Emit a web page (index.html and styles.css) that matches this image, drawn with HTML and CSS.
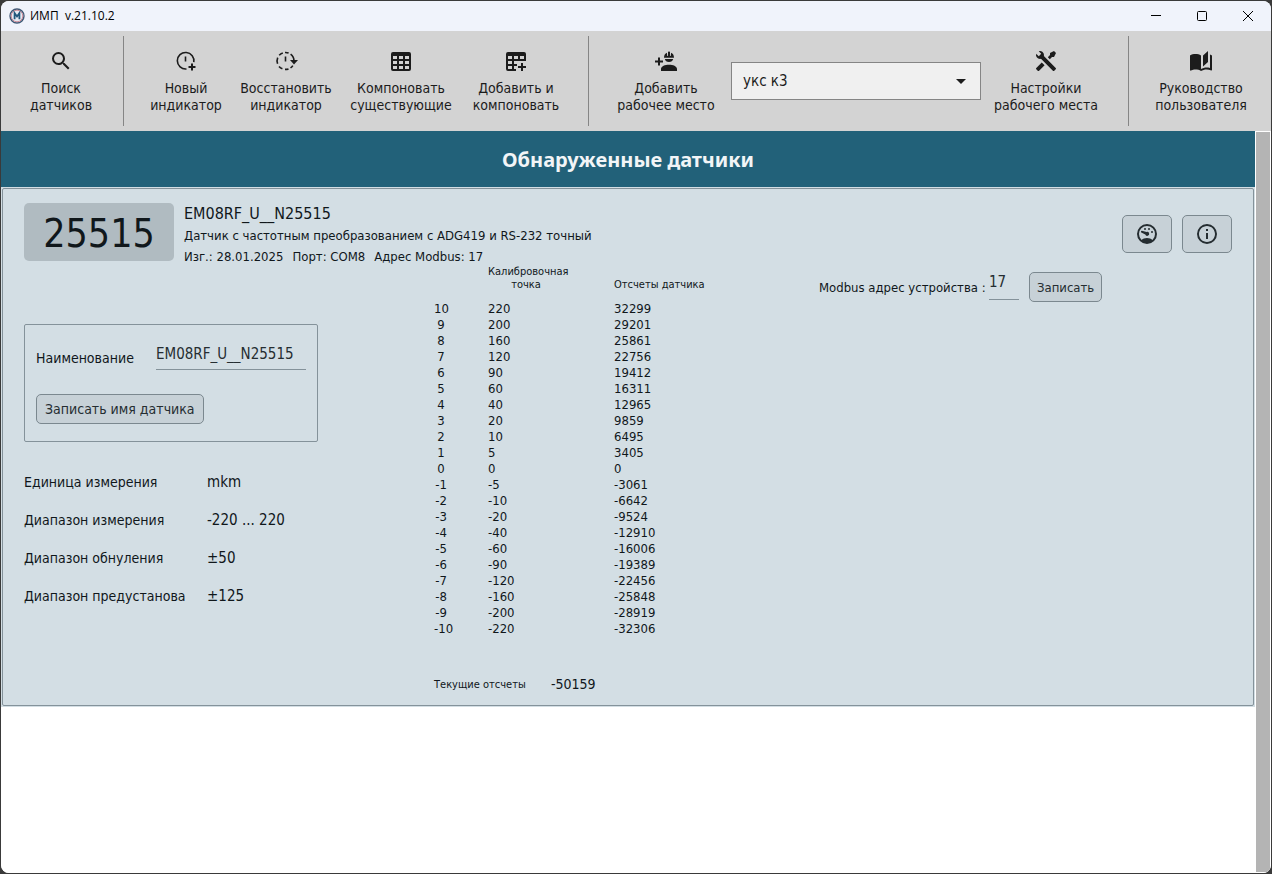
FILE: index.html
```html
<!DOCTYPE html>
<html lang="ru">
<head>
<meta charset="utf-8">
<title>ИМП v.21.10.2</title>
<link rel="stylesheet" href="styles.css">
</head>
<body>
<div class="window">
  <header class="titlebar">
    <svg class="app-logo" viewBox="0 0 16 16" aria-hidden="true">
      <circle cx="8" cy="8" r="7" fill="#e6eaf2" stroke="#3f5875" stroke-width="1.4"/>
      <circle cx="8" cy="8" r="5.8" fill="none" stroke="#c77482" stroke-width="0.8"/>
      <path d="M5.6 11.2V5L8 8.4L10.4 5V11.2" fill="none" stroke="#23577c" stroke-width="1.8"/>
    </svg>
    <span class="app-title">ИМП&nbsp; v.21.10.2</span>
    <div class="window-controls">
      <button class="window-button" aria-label="Свернуть"><svg viewBox="0 0 12 12"><path d="M1 5.5H11"/></svg></button>
      <button class="window-button" aria-label="Развернуть"><svg viewBox="0 0 12 12"><rect x="1.5" y="1.5" width="9" height="9" rx="1"/></svg></button>
      <button class="window-button" aria-label="Закрыть"><svg viewBox="0 0 12 12"><path d="M1 1L11 11M11 1L1 11"/></svg></button>
    </div>
  </header>

  <nav class="toolbar">
    <div class="tool-group group-search">
      <button class="tool"><svg class="icon" viewBox="0 0 24 24"><path d="M9.5,3A6.5,6.5 0 0,1 16,9.5C16,11.11 15.41,12.59 14.44,13.73L14.71,14H15.5L20.5,19L19,20.5L14,15.5V14.71L13.73,14.44C12.59,15.41 11.11,16 9.5,16A6.5,6.5 0 0,1 3,9.5A6.5,6.5 0 0,1 9.5,3M9.5,5C7,5 5,7 5,9.5C5,12 7,14 9.5,14C12,14 14,12 14,9.5C14,7 12,5 9.5,5Z"/></svg><span>Поиск<br>датчиков</span></button>
    </div>
    <div class="tool-group group-indicators">
      <button class="tool"><svg class="icon" viewBox="0 0 24 24"><path class="line thin" d="M12.5 20A8.3 8.3 0 1 1 19.8 13.2M11.5 7.5V12.5"/><path class="line" d="M18 14.5V21.5M14.5 18H21.5"/></svg><span>Новый<br>индикатор</span></button>
      <button class="tool"><svg class="icon" viewBox="0 0 24 24"><path class="line thin" d="M8.8 4A8.5 8.5 0 0 0 5.2 6.3M3.7 8.6A8.5 8.5 0 0 0 3.6 14.7M5 17.4A8.5 8.5 0 0 0 8.4 19.8M11 20.4A8.5 8.5 0 0 0 14.5 19.9M16.5 18.9A8.5 8.5 0 0 0 18.8 16.6M11 3.5A8.5 8.5 0 0 1 14.6 4.1M16.6 5.2A8.5 8.5 0 0 1 20 12M11.5 7.5V12.5"/><path d="M16 11H24L20 15.5Z"/></svg><span>Восстановить<br>индикатор</span></button>
      <button class="tool wide"><svg class="icon" viewBox="0 0 24 24"><path fill-rule="evenodd" d="M4 3H20A2 2 0 0 1 22 5V20A2 2 0 0 1 20 22H4A2 2 0 0 1 2 20V5A2 2 0 0 1 4 3M4 7V10H8V7ZM10 7V10H14V7ZM16 7V10H20V7ZM4 12V15H8V12ZM10 12V15H14V12ZM16 12V15H20V12ZM4 17V20H8V17ZM10 17V20H14V17ZM16 17V20H20V17Z"/></svg><span>Компоновать<br>существующие</span></button>
      <button class="tool"><svg class="icon" viewBox="0 0 24 24"><path fill-rule="evenodd" d="M4 3H20A2 2 0 0 1 22 5V12H10V15H13V17H10V20H12V22H4A2 2 0 0 1 2 20V5A2 2 0 0 1 4 3M4 7V10H8V7ZM10 7V10H14V7ZM16 7V10H20V7ZM4 12V15H8V12ZM4 17V20H8V17Z"/><path class="line" d="M18 14V22M14 18H22"/></svg><span>Добавить и<br>компоновать</span></button>
    </div>
    <div class="tool-group group-workplace">
      <button class="tool"><svg class="icon" viewBox="0 0 24 24"><path class="line" d="M1 12.5H9M5 8.5V16.5"/><path d="M10 8.8C10 6.3 11.1 4.6 12.9 3.8L13.3 7H14V3.2Q14 2.5 14.7 2.5H15.3Q16 2.5 16 3.2V7H16.7L17.1 3.8C18.9 4.6 20 6.3 20 8.8ZM10.8 10H19.2A4.3 3.8 0 0 1 10.8 10M7 22V20C7 17.3 11 15.8 15 15.8S23 17.3 23 20V22Z"/></svg><span>Добавить<br>рабочее место</span></button>
      <select class="workplace" aria-label="Рабочее место"><option>укс к3</option></select>
      <button class="tool"><svg class="icon" viewBox="0 0 24 24"><path d="M21.71 20.29L20.29 21.71A1 1 0 0 1 18.88 21.71L7 9.85A3.81 3.81 0 0 1 6 10A4 4 0 0 1 2.22 4.7L4.76 7.24L5.29 6.71L6.71 5.29L7.24 4.76L4.7 2.22A4 4 0 0 1 10 6A3.81 3.81 0 0 1 9.85 7L21.71 18.88A1 1 0 0 1 21.71 20.29M2.29 18.88A1 1 0 0 0 2.29 20.29L3.71 21.71A1 1 0 0 0 5.12 21.71L10.59 16.25L7.76 13.42M20 2L16 4V6L13.83 8.17L15.83 10.17L18 8H20L22 4Z"/></svg><span>Настройки<br>рабочего места</span></button>
    </div>
    <div class="tool-group group-help">
      <button class="tool"><svg class="icon" viewBox="0 0 24 24"><path d="M19 2L14 6.5V17.5L19 13V2M6.5 5C4.55 5 2.45 5.4 1 6.5V21.16C1 21.41 1.25 21.66 1.5 21.66C1.6 21.66 1.65 21.59 1.75 21.59C3.1 20.94 5.05 20.5 6.5 20.5C8.45 20.5 10.55 20.9 12 22C13.35 21.15 15.8 20.5 17.5 20.5C19.15 20.5 20.85 20.81 22.25 21.56C22.35 21.61 22.4 21.59 22.5 21.59C22.75 21.59 23 21.34 23 21.09V6.5C22.4 6.05 21.75 5.75 21 5.5V19C19.9 18.65 18.7 18.5 17.5 18.5C15.8 18.5 13.35 19.15 12 20V6.5C10.55 5.4 8.45 5 6.5 5Z"/></svg><span>Руководство<br>пользователя</span></button>
    </div>
  </nav>

  <div class="body">
    <main class="content">
      <h1 class="banner">Обнаруженные датчики</h1>
      <section class="card-frame">
        <div class="card">
          <div class="card-head">
            <div class="serial">25515</div>
            <div class="summary">
              <h2 class="sensor-name">EM08RF_U__N25515</h2>
              <p class="sensor-type">Датчик с частотным преобразованием с ADG419 и RS-232 точный</p>
              <p class="sensor-meta"><span>Изг.: 28.01.2025</span><span>Порт: COM8</span><span>Адрес Modbus: 17</span></p>
            </div>
            <div class="card-actions">
              <button class="button icon-button" aria-label="Показания"><svg class="icon" viewBox="0 0 24 24"><circle class="line" cx="12" cy="12" r="9"/><path d="M12 16C14.2 16 16.2 16.8 17.8 18.2C16.2 20 14.2 21 12 21S7.8 20 6.2 18.2C7.8 16.8 9.8 16 12 16M6.9 8.8L11.6 10A2 2 0 1 1 10.3 12.6L6.3 10.6A1 1 0 0 1 6.9 8.8"/><circle cx="10" cy="7" r="1"/><circle cx="14" cy="7" r="1"/><circle cx="17" cy="10" r="1"/></svg></button>
              <button class="button icon-button" aria-label="Информация"><svg class="icon" viewBox="0 0 24 24"><path d="M11,9H13V7H11M12,20C7.59,20 4,16.41 4,12C4,7.59 7.59,4 12,4C16.41,4 20,7.59 20,12C20,16.41 16.41,20 12,20M12,2A10,10 0 0,0 2,12A10,10 0 0,0 12,22A10,10 0 0,0 22,12A10,10 0 0,0 12,2M11,17H13V11H11V17Z"/></svg></button>
            </div>
          </div>

          <div class="card-body">
            <div class="properties">
              <form class="name-box">
                <div class="name-row">
                  <label for="sensor-name">Наименование</label>
                  <input class="text-field" id="sensor-name" type="text" value="EM08RF_U__N25515">
                </div>
                <button class="button name-button" type="button">Записать имя датчика</button>
              </form>
              <dl class="params">
                <dt>Единица измерения</dt><dd>mkm</dd>
                <dt>Диапазон измерения</dt><dd>-220 ... 220</dd>
                <dt>Диапазон обнуления</dt><dd>±50</dd>
                <dt>Диапазон предустанова</dt><dd>±125</dd>
              </dl>
            </div>

            <div class="calibration">
              <table class="points">
                <thead><tr><th class="index"></th><th class="point">Калибровочная<br>точка</th><th>Отсчеты датчика</th></tr></thead>
                <tbody>
                  <tr><td class="index">10</td><td>220</td><td>32299</td></tr>
                  <tr><td class="index">9</td><td>200</td><td>29201</td></tr>
                  <tr><td class="index">8</td><td>160</td><td>25861</td></tr>
                  <tr><td class="index">7</td><td>120</td><td>22756</td></tr>
                  <tr><td class="index">6</td><td>90</td><td>19412</td></tr>
                  <tr><td class="index">5</td><td>60</td><td>16311</td></tr>
                  <tr><td class="index">4</td><td>40</td><td>12965</td></tr>
                  <tr><td class="index">3</td><td>20</td><td>9859</td></tr>
                  <tr><td class="index">2</td><td>10</td><td>6495</td></tr>
                  <tr><td class="index">1</td><td>5</td><td>3405</td></tr>
                  <tr><td class="index">0</td><td>0</td><td>0</td></tr>
                  <tr><td class="index">-1</td><td>-5</td><td>-3061</td></tr>
                  <tr><td class="index">-2</td><td>-10</td><td>-6642</td></tr>
                  <tr><td class="index">-3</td><td>-20</td><td>-9524</td></tr>
                  <tr><td class="index">-4</td><td>-40</td><td>-12910</td></tr>
                  <tr><td class="index">-5</td><td>-60</td><td>-16006</td></tr>
                  <tr><td class="index">-6</td><td>-90</td><td>-19389</td></tr>
                  <tr><td class="index">-7</td><td>-120</td><td>-22456</td></tr>
                  <tr><td class="index">-8</td><td>-160</td><td>-25848</td></tr>
                  <tr><td class="index">-9</td><td>-200</td><td>-28919</td></tr>
                  <tr><td class="index">-10</td><td>-220</td><td>-32306</td></tr>
                </tbody>
              </table>
              <div class="current"><span class="current-label">Текущие отсчеты</span><output>-50159</output></div>
            </div>

            <form class="modbus">
              <label for="modbus">Modbus адрес устройства :</label>
              <input class="text-field" id="modbus" type="text" value="17">
              <button class="button" type="button">Записать</button>
            </form>
          </div>
        </div>
      </section>
    </main>
    <div class="scrollbar"></div>
  </div>
</div>
</body>
</html>
```
FILE: styles.css
```css
* { box-sizing: border-box; }

body {
  margin: 0;
  height: 100vh;
  padding: 1px;
  display: flex;
  background: #3a3a3a;
  color: #10171b;
  font: 14px/17px Tahoma, "DejaVu Sans Condensed", "Noto Sans", sans-serif;
}

button, input, select { font: inherit; color: inherit; }
button { padding: 0; border: 0; background: none; }
h1, h2, p, dl, dd { margin: 0; font-weight: normal; }

.window {
  flex: 1;
  min-width: 0;
  display: flex;
  flex-direction: column;
  overflow: hidden;
  border-radius: 8px;
  background: #fff;
}

/* Title bar */
.titlebar {
  display: flex;
  align-items: center;
  height: 30px;
  padding-left: 8px;
  background: #f0f3fb;
}
.app-logo { width: 16px; height: 16px; }
.app-title {
  flex: 1;
  padding-left: 5px;
  color: #000;
  font: 12px/16px "Open Sans", "Noto Sans", sans-serif;
}
.window-controls { display: flex; }
.window-button {
  width: 46px;
  height: 30px;
  display: flex;
  align-items: center;
  justify-content: center;
}
.window-button svg {
  width: 12px;
  height: 12px;
  fill: none;
  stroke: #000;
}

/* Toolbar */
.toolbar {
  display: flex;
  height: 100px;
  padding: 5px 0;
  background: #d3d3d3;
  color: #1c1c1c;
}
.tool-group { display: flex; align-items: flex-start; }
.tool-group + .tool-group { border-left: 1px solid #858585; }
.group-search { padding-right: 2px; }
.group-search .tool { width: 120px; }
.group-indicators { padding: 0 22px 0 12px; }
.group-workplace { flex: 1; padding: 0 32px 0 27px; }
.group-help { padding: 0 20px 0 22px; }
.tool {
  flex: none;
  width: 100px;
  padding-top: 13px;
  display: flex;
  flex-direction: column;
  align-items: center;
  gap: 7px;
  white-space: nowrap;
}
.tool.wide { width: 130px; }
.icon { display: block; width: 24px; height: 24px; fill: currentColor; }
.line { fill: none; stroke: currentColor; stroke-width: 2; }
.thin { stroke-width: 1.6; }
.workplace {
  flex: 1;
  min-width: 120px;
  height: 38px;
  margin: 26px 15px 0;
  padding: 0 11px;
  appearance: none;
  border: 1px solid #858585;
  border-radius: 0;
  background: #f0f0f0 url("data:image/svg+xml,%3Csvg xmlns='http://www.w3.org/2000/svg' width='10' height='5'%3E%3Cpath d='M0 0H10L5 5Z' fill='%231c1c1c'/%3E%3C/svg%3E") no-repeat right 14px center;
  font-size: 15px;
}

/* Content */
.body { flex: 1; display: flex; min-height: 0; background: #fff; }
.content { flex: 1; min-width: 0; }
.scrollbar {
  width: 14px;
  margin: 1px;
  background: #b4b4b4;
}
.banner {
  height: 56px;
  background: #226179;
  color: #f2f5f7;
  font: bold 20px/58px "Noto Sans", sans-serif;
  text-align: center;
}
.card-frame { padding: 1px; background: #d3dee4; }
.card {
  padding: 14px 21px 12px;
  border: 1px solid #84929a;
  border-radius: 2px;
  background: #d3dee4;
}
.card-head { display: flex; gap: 10px; height: 62px; }
.serial {
  width: 150px;
  height: 58px;
  border-radius: 5px;
  background: #b0bbc1;
  font-size: 39px;
  line-height: 62px;
  text-align: center;
}
.summary { flex: 1; }
.sensor-name { font-size: 16px; line-height: 22px; }
.sensor-type { font-size: 13px; line-height: 22px; }
.sensor-meta { display: flex; gap: 9px; font-size: 13px; line-height: 19px; }
.card-actions { display: flex; gap: 10px; padding-top: 12px; }

.button {
  height: 30px;
  padding: 0 7px;
  border: 1px solid #7b888f;
  border-radius: 5px;
  background: #c7d1d7;
  color: #252d31;
  white-space: nowrap;
}
.icon-button {
  display: flex;
  align-items: center;
  justify-content: center;
  width: 50px;
  height: 38px;
}

.card-body { display: grid; grid-template-columns: 410px 385px 1fr; }

.text-field {
  height: 32px;
  padding: 0;
  border: 0;
  border-bottom: 1px solid #84929a;
  background: none;
  color: #252d31;
  font-size: 15px;
}

.properties { padding-top: 59px; }
.name-box {
  width: 294px;
  height: 118px;
  padding: 13px 11px;
  border: 1px solid #84929a;
  border-radius: 2px;
}
.name-row { display: flex; justify-content: space-between; align-items: center; }
.name-row label { padding-top: 9px; }
.name-row .text-field { width: 150px; }
.name-button { margin-top: 24px; padding: 0 8px; }
.params {
  display: grid;
  grid-template-columns: 183px 1fr;
  grid-auto-rows: 38px;
  align-items: center;
  padding-top: 21px;
}
.params dd { font-size: 15px; }

.calibration { font-size: 13px; }
.points {
  width: 100%;
  table-layout: fixed;
  border-collapse: collapse;
  line-height: 16px;
  white-space: nowrap;
}
.points th {
  height: 36px;
  padding: 0 0 10px;
  font-size: 11px;
  line-height: 13px;
  font-weight: normal;
  text-align: left;
  vertical-align: bottom;
}
.points td { padding: 0; }
.points .index { width: 54px; padding-right: 40px; text-align: center; }
.points .point { width: 126px; padding-right: 50px; text-align: center; }
.current { display: flex; align-items: center; padding-top: 39px; }
.current-label { width: 117px; font-size: 11px; }
.current output { font-size: 14px; }

.modbus {
  display: grid;
  grid-template-columns: 170px 30px auto;
  align-items: start;
  justify-content: start;
  font-size: 13px;
}
.modbus label { padding-top: 14px; white-space: nowrap; }
.modbus .text-field { width: 30px; height: 35px; }
.modbus .button { margin: 7px 0 0 10px; }
```
